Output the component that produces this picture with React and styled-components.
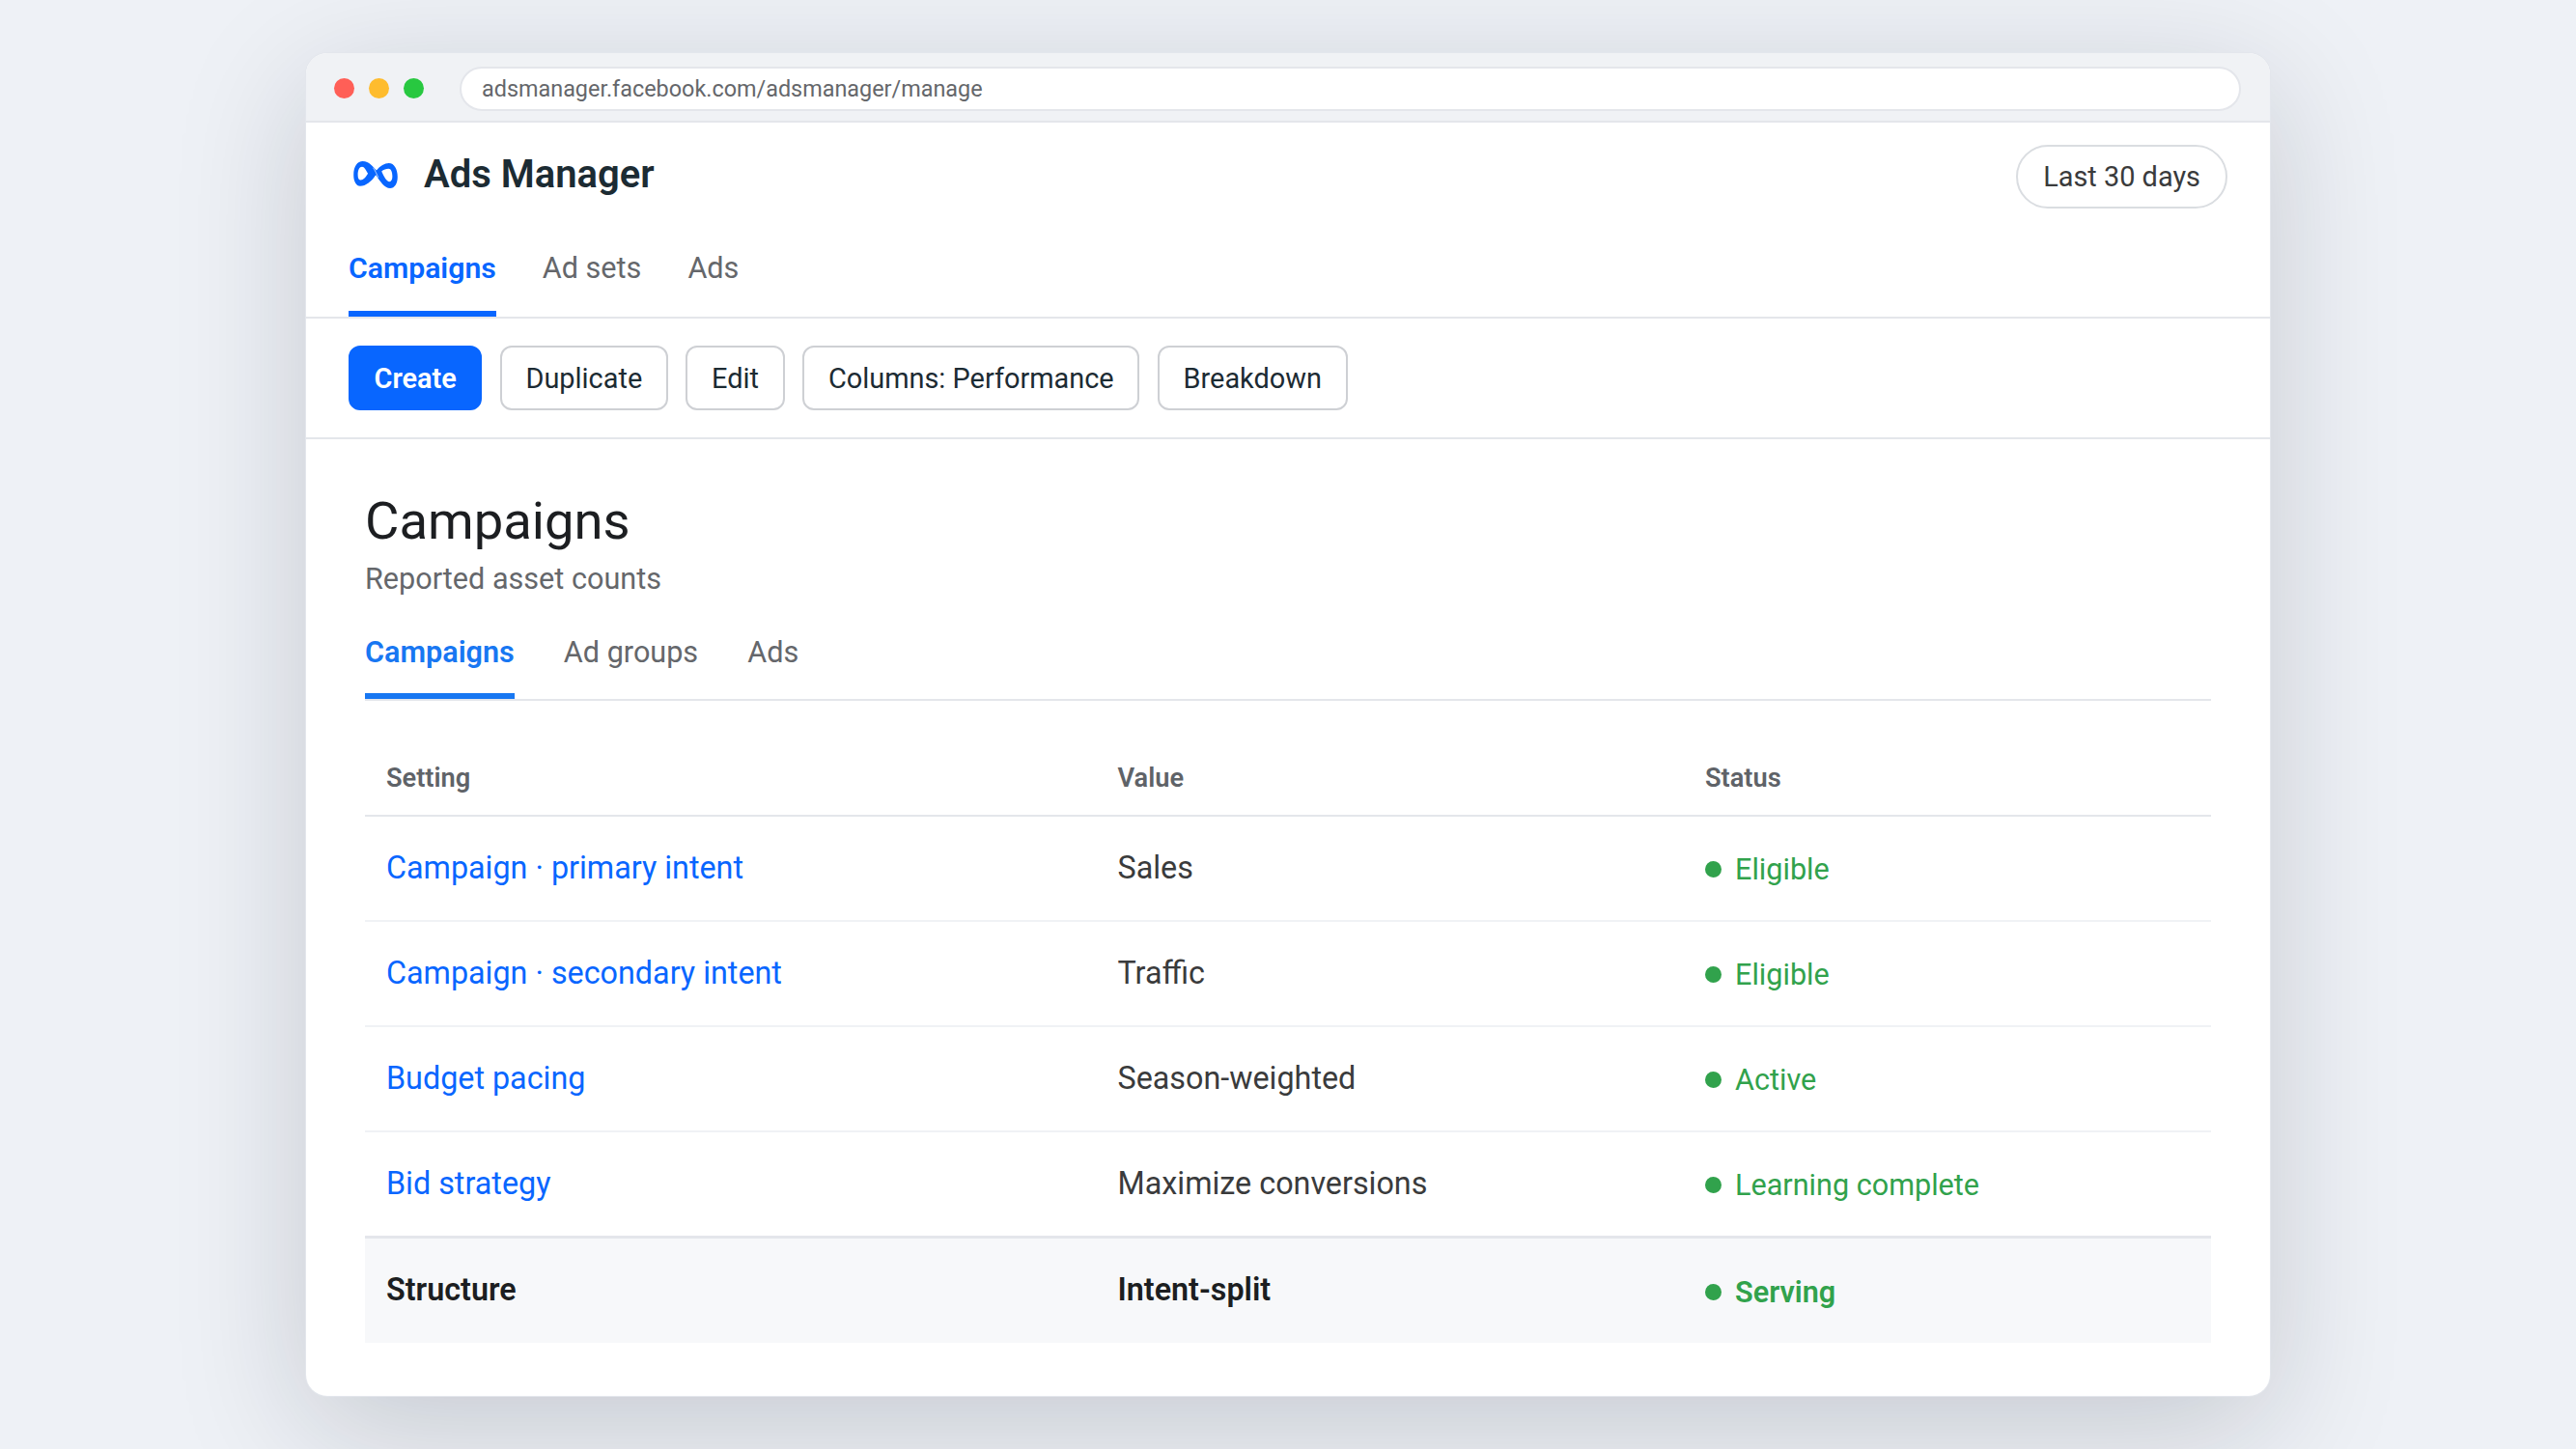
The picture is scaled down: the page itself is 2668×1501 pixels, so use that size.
import React from 'react';
import styled, { createGlobalStyle } from 'styled-components';

const GlobalStyle = createGlobalStyle`
  html, body {
    margin: 0;
    padding: 0;
    background: #eef1f6;
  }
  * {
    box-sizing: border-box;
  }
`;

const rows = [
  { setting: 'Campaign · primary intent', value: 'Sales', status: 'Eligible' },
  { setting: 'Campaign · secondary intent', value: 'Traffic', status: 'Eligible' },
  { setting: 'Budget pacing', value: 'Season-weighted', status: 'Active' },
  { setting: 'Bid strategy', value: 'Maximize conversions', status: 'Learning complete' },
];

const MetaLogo = () => (
  <LogoSvg viewBox="0 0 135 83" aria-hidden="true">
    <path
      fillRule="evenodd"
      d="M0 42C0 15 12 0 28 0C48 0 60 18 70 28C82 14 95 6 108 6C125 6 135 25 135 48C135 68 126 83 112 83C95 83 82 62 68 42C55 62 38 76 20 76C8 76 0 62 0 42ZM13 42C13 52 16 58 22 58C30 58 38 49 44 38C38 27 33 17 26 17C18 17 13 27 13 42ZM86 31C93 47 102 63 110 63C116 63 119 56 119 47C119 33 115 23 107 23C100 23 92 26 86 31Z"
    />
    <path d="M60 20C66 28 70 38 76 50" fill="none" stroke="#ffffff" strokeWidth="2" />
  </LogoSvg>
);

const App = () => {
  return (
    <Page>
      <GlobalStyle />
      <BrowserWindow>
        <ChromeBar>
          <Dots>
            <Dot color="#ff5f57" />
            <Dot color="#febc2e" />
            <Dot color="#28c840" />
          </Dots>
          <UrlBar>adsmanager.facebook.com/adsmanager/manage</UrlBar>
        </ChromeBar>

        <AppHeader>
          <TitleRow>
            <Brand>
              <MetaLogo />
              <BrandName>Ads Manager</BrandName>
            </Brand>
            <DatePill>Last 30 days</DatePill>
          </TitleRow>
          <TopTabs>
            <TopTab active>Campaigns</TopTab>
            <TopTab>Ad sets</TopTab>
            <TopTab>Ads</TopTab>
          </TopTabs>
        </AppHeader>

        <Toolbar>
          <ToolButton primary>Create</ToolButton>
          <ToolButton>Duplicate</ToolButton>
          <ToolButton>Edit</ToolButton>
          <ToolButton>Columns: Performance</ToolButton>
          <ToolButton>Breakdown</ToolButton>
        </Toolbar>

        <Content>
          <Heading>Campaigns</Heading>
          <Subtitle>Reported asset counts</Subtitle>
          <SubTabs>
            <SubTab active>Campaigns</SubTab>
            <SubTab>Ad groups</SubTab>
            <SubTab>Ads</SubTab>
          </SubTabs>

          <Table>
            <HeadRow>
              <HeadCell>Setting</HeadCell>
              <HeadCell>Value</HeadCell>
              <HeadCell>Status</HeadCell>
            </HeadRow>
            {rows.map((row) => (
              <Row key={row.setting}>
                <LinkCell>{row.setting}</LinkCell>
                <ValueCell>{row.value}</ValueCell>
                <Status>
                  <StatusDot />
                  {row.status}
                </Status>
              </Row>
            ))}
            <TotalRow>
              <TotalCell>Structure</TotalCell>
              <TotalCell>Intent-split</TotalCell>
              <Status bold>
                <StatusDot />
                Serving
              </Status>
            </TotalRow>
          </Table>
        </Content>
      </BrowserWindow>
    </Page>
  );
};

export default App;

const Page = styled.div`
  min-height: 100vh;
  display: flex;
  align-items: center;
  justify-content: center;
  background: #eef1f6;
  font-family: Roboto, "Liberation Sans", sans-serif;
  overflow: hidden;
`;

const BrowserWindow = styled.div`
  width: 2034px;
  background: #ffffff;
  border-radius: 22px;
  box-shadow: 0 0 0 1px #e3e6ec, 0 34px 136px rgba(16, 24, 40, 0.18);
  overflow: hidden;
`;

const ChromeBar = styled.div`
  height: 72px;
  display: flex;
  align-items: center;
  padding: 3px 30px 0 29px;
  background: #f0f2f5;
  border-bottom: 2px solid #e4e6eb;
`;

const Dots = styled.div`
  display: flex;
  gap: 15px;
  margin-right: 37px;
`;

const Dot = styled.span`
  width: 21px;
  height: 21px;
  border-radius: 50%;
  background: ${(props) => props.color};
`;

const UrlBar = styled.div`
  flex: 1;
  height: 46px;
  display: flex;
  align-items: center;
  padding: 0 21px;
  background: #ffffff;
  border: 2px solid #e4e6eb;
  border-radius: 23px;
  font-size: 23.4px;
  color: #65676b;
`;

const AppHeader = styled.div`
  padding: 23px 44px 0;
  border-bottom: 2px solid #e4e6eb;
`;

const TitleRow = styled.div`
  display: flex;
  align-items: center;
  justify-content: space-between;
`;

const Brand = styled.div`
  display: flex;
  align-items: center;
  gap: 27px;
  padding: 0 0 5px 5px;
`;

const LogoSvg = styled.svg`
  width: 46px;
  height: 28px;
  fill: #0866ff;
`;

const BrandName = styled.div`
  font-size: 40px;
  font-weight: 600;
  color: #1c2b33;
`;

const DatePill = styled.div`
  height: 66px;
  display: flex;
  align-items: center;
  padding: 0 26px;
  border: 2px solid #dadde1;
  border-radius: 33px;
  font-size: 28.9px;
  color: #3a3b3c;
`;

const TopTabs = styled.div`
  display: flex;
  gap: 48px;
  margin-top: 16px;
`;

const TopTab = styled.div`
  height: 96px;
  display: flex;
  align-items: center;
  border-bottom: 6px solid ${(props) => (props.active ? '#0866ff' : 'transparent')};
  font-size: ${(props) => (props.active ? '30.2px' : '30.6px')};
  font-weight: ${(props) => (props.active ? 600 : 400)};
  color: ${(props) => (props.active ? '#0866ff' : '#65676b')};
`;

const Toolbar = styled.div`
  display: flex;
  gap: 18.3px;
  padding: 28px 44px;
  border-bottom: 2px solid #e4e6eb;
`;

const ToolButton = styled.div`
  height: 67px;
  display: flex;
  align-items: center;
  padding: 0 ${(props) => (props.primary ? '24.5px' : '24.8px')};
  border: 2px solid ${(props) => (props.primary ? '#0866ff' : '#ced0d4')};
  border-radius: 12px;
  background: ${(props) => (props.primary ? '#0866ff' : '#ffffff')};
  color: ${(props) => (props.primary ? '#ffffff' : '#1c2b33')};
  font-size: 28.9px;
  font-weight: ${(props) => (props.primary ? 600 : 400)};
`;

const Content = styled.div`
  padding: 53px 61px 55px;
`;

const Heading = styled.div`
  font-size: 54.4px;
  line-height: 64px;
  color: #1c1e21;
`;

const Subtitle = styled.div`
  margin-top: 8px;
  font-size: 30.6px;
  line-height: 40px;
  color: #65676b;
`;

const SubTabs = styled.div`
  display: flex;
  gap: 51px;
  margin-top: 13px;
  border-bottom: 2px solid #e4e6eb;
`;

const SubTab = styled.div`
  height: 91px;
  display: flex;
  align-items: center;
  border-bottom: 6px solid ${(props) => (props.active ? '#1877f2' : 'transparent')};
  font-size: 30.6px;
  font-weight: ${(props) => (props.active ? 600 : 400)};
  color: ${(props) => (props.active ? '#1877f2' : '#65676b')};
`;

const Table = styled.div`
  margin-top: 0;
`;

const gridColumns = 'grid-template-columns: 757.5px 608.5px 1fr;';

const HeadRow = styled.div`
  display: grid;
  ${gridColumns}
  height: 120px;
  padding-top: 41px;
  align-items: center;
  border-bottom: 2px solid #e4e6eb;
`;

const HeadCell = styled.div`
  padding-left: 22px;
  font-size: 27.2px;
  font-weight: 600;
  color: #5f6368;
`;

const Row = styled.div`
  display: grid;
  ${gridColumns}
  height: 109px;
  align-items: center;
  border-bottom: 2px solid #f0f2f5;

  &:nth-last-child(2) {
    height: 110px;
    border-bottom: 3px solid #e4e6eb;
  }
`;

const LinkCell = styled.div`
  padding: 0 0 2px 22px;
  font-size: 32.3px;
  color: #0866ff;
`;

const ValueCell = styled.div`
  padding: 0 0 2px 22px;
  font-size: 32.3px;
  color: #3a3b3c;
`;

const TotalRow = styled.div`
  display: grid;
  ${gridColumns}
  height: 108px;
  align-items: center;
  background: #f7f8fa;
`;

const TotalCell = styled.div`
  padding: 0 0 2px 22px;
  font-size: 32.3px;
  font-weight: 600;
  color: #1c1e21;
`;

const Status = styled.div`
  display: flex;
  align-items: center;
  gap: 14px;
  padding: 2px 0 0 22px;
  font-size: 30.6px;
  font-weight: ${(props) => (props.bold ? 600 : 400)};
  color: #31a24c;
`;

const StatusDot = styled.span`
  width: 17px;
  height: 17px;
  border-radius: 50%;
  background: #31a24c;
`;
